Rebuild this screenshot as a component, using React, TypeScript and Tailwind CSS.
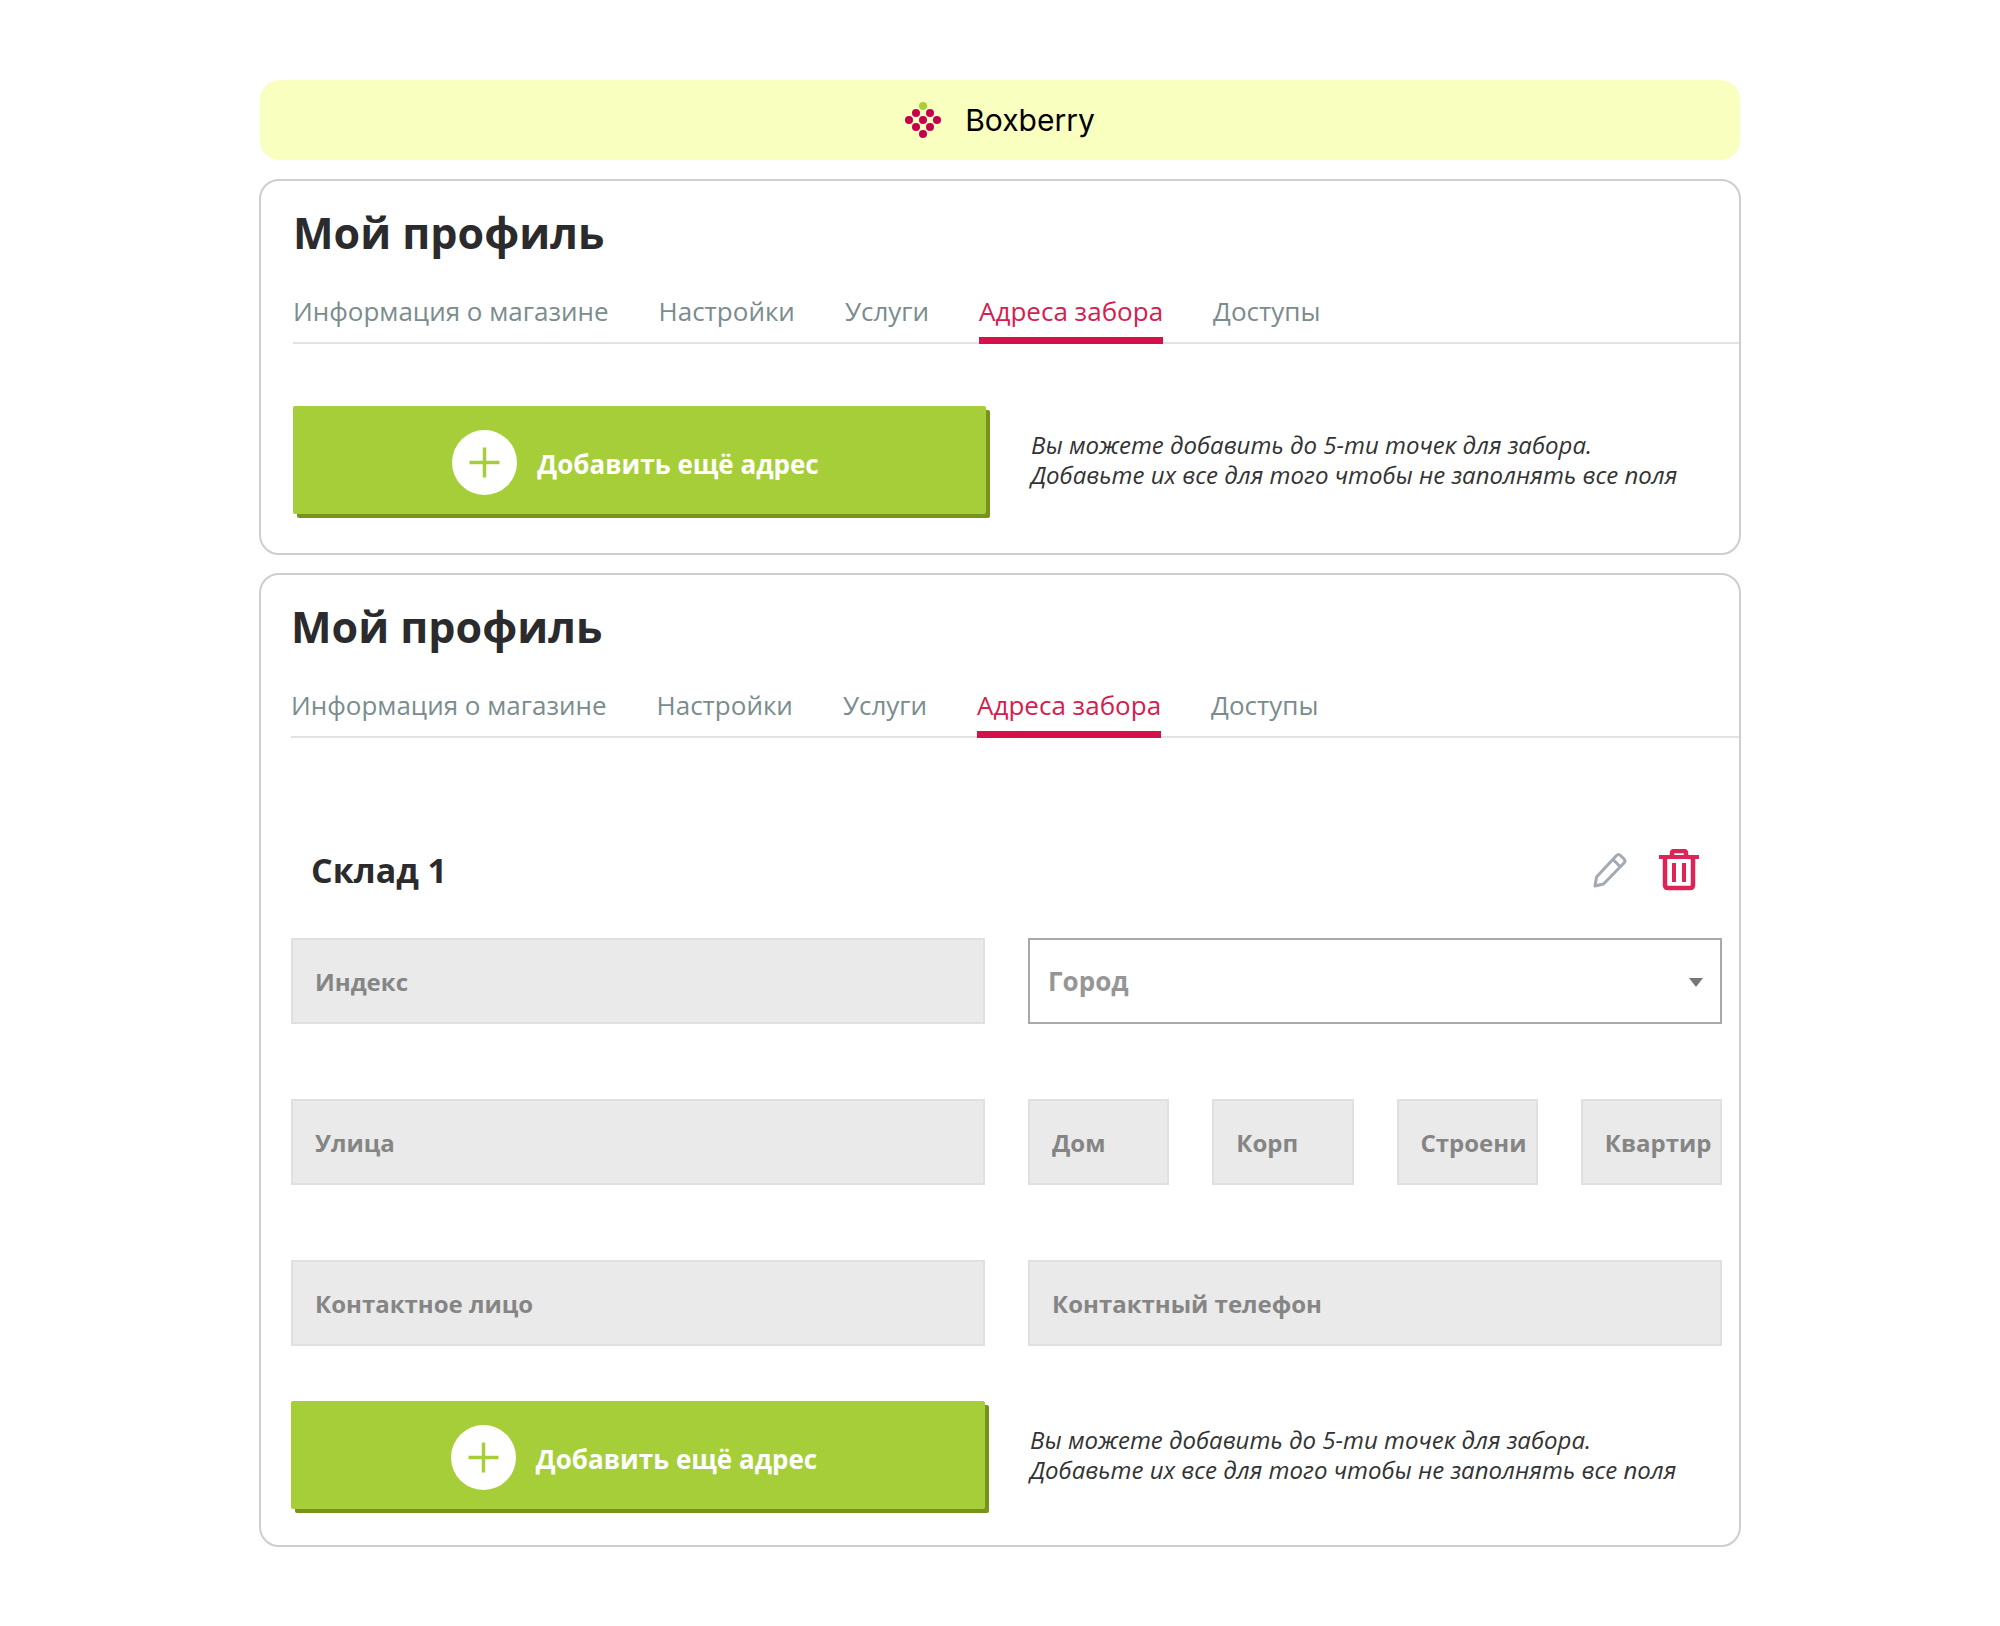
import { useState } from 'react';
import clsx from 'clsx';

const tabs = ['Информация о магазине', 'Настройки', 'Услуги', 'Адреса забора', 'Доступы'];

const berries = [
  [11, 11], [25, 11],
  [4, 18], [18, 18], [32, 18],
  [11, 25], [25, 25],
  [18, 32],
];

function Logo() {
  return (
    <svg viewBox="0 0 36 36" className="size-9" aria-hidden="true">
      <circle cx="18" cy="4" r="4" fill="#a9cf38" />
      {berries.map(([x, y]) => (
        <circle key={`${x}-${y}`} cx={x} cy={y} r="4" fill="#c4004f" />
      ))}
    </svg>
  );
}

function ProfileHeader() {
  const [active, setActive] = useState('Адреса забора');

  return (
    <header>
      <h1 className="text-[43px] leading-[60px] font-bold text-[#2b2b2e]">Мой профиль</h1>
      <nav className="mt-[21px] flex gap-[50px] border-b-2 border-[#dfe3e3]">
        {tabs.map(tab => (
          <a
            key={tab}
            href="#"
            onClick={e => { e.preventDefault(); setActive(tab); }}
            className={clsx(
              '-mb-0.5 h-[60px] border-b-[7px] text-[26px] leading-[54px] whitespace-nowrap',
              tab === active ? 'border-[#d5104b] text-[#d5204f]' : 'border-transparent text-[#7b8c8e]'
            )}
          >
            {tab}
          </a>
        ))}
      </nav>
    </header>
  );
}

function AddAddress() {
  return (
    <div className="grid grid-cols-2 items-center gap-[43px]">
      <button className="flex h-[108px] items-center justify-center gap-5 rounded-xs bg-[#a6ce39] pt-1 pr-2 text-[26px] font-bold text-white shadow-[4px_4px_0_#76931c]">
        <svg viewBox="0 0 65 65" className="size-[65px]" aria-hidden="true">
          <circle cx="32.5" cy="32.5" r="32.5" fill="#fff" />
          <path d="M32.5 17.5v30M17.5 32.5h30" stroke="#a6ce39" strokeWidth="3.5" />
        </svg>
        <span className="pt-1">Добавить ещё адрес</span>
      </button>
      <p className="pl-0.5 text-[24px] leading-[30px] text-[#333] italic">
        Вы можете добавить до 5-ти точек для забора.<br />
        Добавьте их все для того чтобы не заполнять все поля
      </p>
    </div>
  );
}

function Field({ name, small }: { name: string; small?: boolean }) {
  return (
    <input
      type="text"
      placeholder={name}
      aria-label={name}
      className={clsx(
        'h-[86px] w-full min-w-0 border-2 border-[#dfe1e1] bg-[#eaeaea] pl-[22px] text-[24px] font-bold text-gray-700 outline-none placeholder:text-[#858585]',
        small ? 'pr-0' : 'pr-5'
      )}
    />
  );
}

function PencilIcon() {
  return (
    <svg viewBox="0 0 36 38" className="h-[38px] w-9" fill="none" stroke="#a3aab2" strokeWidth="3" strokeLinejoin="round" aria-hidden="true">
      <path d="M3 35l1.500-9L24.500 4.500q2-2 4 0l3.500 3.500q2 2 0 4L11.500 33z" />
      <path d="M21 8.500l7.500 7.500" />
    </svg>
  );
}

function TrashIcon() {
  return (
    <svg viewBox="0 0 42 42" className="size-[42px]" fill="none" stroke="#dc2457" strokeWidth="4" aria-hidden="true">
      <path d="M1 8h40" />
      <path d="M14 8V4.500q0-2.500 2.500-2.500h9q2.500 0 2.500 2.500V8" strokeWidth="4.500" />
      <path d="M7 8v28q0 3 3 3h22q3 0 3-3V8" strokeWidth="4.500" />
      <path d="M16 14v19M26 14v19" />
    </svg>
  );
}

export default function App() {
  return (
    <main className="min-h-screen bg-white px-4 py-20 font-['Open_Sans','Noto_Sans',sans-serif]">
      <div className="mx-auto flex max-w-[1482px] flex-col">
        <div className="mx-px mb-[19px] flex h-20 items-center justify-center gap-6 rounded-[20px] bg-[#f9ffbe]">
          <Logo />
          <span className="font-['Inter',sans-serif] text-[30px] text-black">Boxberry</span>
        </div>

        <section className="mb-[18px] rounded-[20px] border-2 border-[#cecece] pt-[22px] pb-[39px] pl-8">
          <ProfileHeader />
          <div className="mt-[62px] pr-[17px]">
            <AddAddress />
          </div>
        </section>

        <section className="rounded-[20px] border-2 border-[#cecece] pt-[22px] pb-9 pl-[30px]">
          <ProfileHeader />
          <div className="mt-[102px] pr-[17px]">
            <div className="mb-[38px] flex h-[60px] items-center pr-[22px] pl-5">
              <h2 className="flex-1 text-[34px] font-bold text-[#2b2b2e]">Склад 1</h2>
              <button aria-label="Редактировать" className="mr-[30px]"><PencilIcon /></button>
              <button aria-label="Удалить"><TrashIcon /></button>
            </div>
            <form className="mb-[55px] grid grid-cols-2 gap-x-[43px] gap-y-[75px]">
              <Field name="Индекс" />
              <div className="relative">
                <select aria-label="Город" className="h-[86px] w-full appearance-none border-2 border-[#a9a9a9] bg-white px-[18px] text-[26px] font-bold text-[#969696] outline-none">
                  <option>Город</option>
                </select>
                <svg viewBox="0 0 14 9" className="pointer-events-none absolute top-10 right-[19px] h-[9px] w-3.5" aria-hidden="true">
                  <path d="M0 0h14L7 9z" fill="#777" />
                </svg>
              </div>
              <Field name="Улица" />
              <div className="grid grid-cols-4 gap-[43px]">
                <Field name="Дом" small />
                <Field name="Корп" small />
                <Field name="Строени" small />
                <Field name="Квартир" small />
              </div>
              <Field name="Контактное лицо" />
              <Field name="Контактный телефон" />
            </form>
            <AddAddress />
          </div>
        </section>
      </div>
    </main>
  );
}
